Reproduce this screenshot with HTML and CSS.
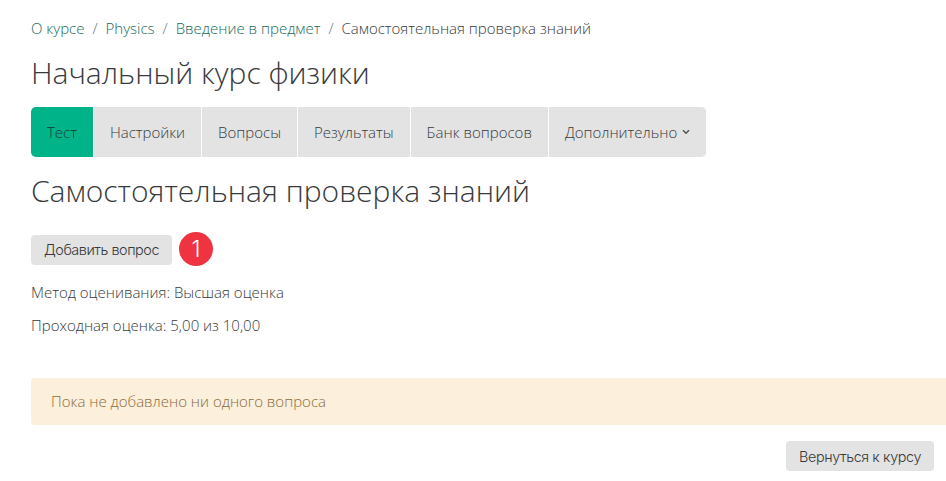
FILE: index.html
```html
<!DOCTYPE html>
<html lang="ru">
<head>
<meta charset="utf-8">
<title>Самостоятельная проверка знаний</title>
<link rel="stylesheet" href="styles.css">
</head>
<body>
<main class="page">
  <nav class="crumbs">
    <a href="#">О курсе</a><span class="sep">/</span>
    <a href="#">Physics</a><span class="sep">/</span>
    <a href="#">Введение в предмет</a><span class="sep">/</span>
    <span>Самостоятельная проверка знаний</span>
  </nav>
  <h1 class="title">Начальный курс физики</h1>
  <ul class="tabs">
    <li class="tab active">Тест</li>
    <li class="tab">Настройки</li>
    <li class="tab">Вопросы</li>
    <li class="tab">Результаты</li>
    <li class="tab">Банк вопросов</li>
    <li class="tab">Дополнительно<svg class="caret" viewBox="0 0 8 6" width="8" height="6"><path d="M1 1.2 4 4.2 7 1.2" fill="none" stroke="#555" stroke-width="1.5"/></svg></li>
  </ul>
  <h2 class="subtitle">Самостоятельная проверка знаний</h2>
  <div class="action-row">
    <button class="btn btn-add">Добавить вопрос</button>
    <span class="badge">1</span>
  </div>
  <p class="info first">Метод оценивания: Высшая оценка</p>
  <p class="info">Проходная оценка: 5,00 из 10,00</p>
  <div class="alert">Пока не добавлено ни одного вопроса</div>
  <div class="footer-row"><button class="btn">Вернуться к курсу</button></div>
</main>
</body>
</html>
```
FILE: styles.css
```css
* { box-sizing: border-box; }
html, body { margin: 0; padding: 0; background: #fff; overflow: hidden; }
body { width: 946px; height: 481px; font-family: "Open Sans", sans-serif; font-weight: 300; font-size: 15px; color: #373a3c; }
.page { padding: 18px 12px 0 31px; width: 946px; }
.crumbs { display: flex; height: 21px; line-height: 21px; font-size: 15px; color: #373a3c; white-space: nowrap; }
.crumbs a { color: #1a6b5c; text-decoration: none; }
.sep { margin: 0 8px; color: #6c757d; }
.title { margin: 14px 0 0; font-size: 30px; font-weight: 300; line-height: 40px; color: #373a3c; }
.tabs { display: flex; list-style: none; margin: 14px 0 0; padding: 0; height: 50px; width: 675px; background: #e3e3e3; border-radius: 5px; overflow: hidden; }
.tab { display: flex; align-items: center; padding: 0 16px; background: #e3e3e3; border-left: 1px solid #fff; color: #373a3c; font-size: 15px; white-space: nowrap; }
.tab.active { background: #00b388; border-left: 0; color: #1c3b34; padding: 0 16px; }
.caret { margin-left: 5px; }
.subtitle { margin: 14px 0 0; font-size: 30px; font-weight: 300; line-height: 40px; color: #373a3c; }
.action-row { display: flex; align-items: center; margin-top: 21px; height: 35px; }
.btn { height: 30px; padding: 0 13px; border: 0; border-radius: 4px; background: #e3e3e3; color: #373a3c; font-family: "Inter", sans-serif; font-weight: 300; font-size: 14.4px; letter-spacing: -0.4px; white-space: nowrap; }
.btn-add { letter-spacing: -0.45px; }
.badge { display: flex; align-items: center; justify-content: center; width: 34px; height: 34px; margin: 0 0 1px 7px; border-radius: 50%; background: #ef3340; color: #fff; font-family: "Inter", sans-serif; font-weight: 300; font-size: 23px; }
.info { margin: 0; line-height: 21px; }
.info.first { margin-top: 15px; }
.info + .info { margin-top: 12px; }
.alert { margin: 42px -40px 0 0; height: 47px; padding: 0 20px; line-height: 47px; border-radius: 4px 0 0 4px; background: #fcefdc; color: #8a6d3b; }
.footer-row { display: flex; justify-content: flex-end; margin-top: 16px; }
```
